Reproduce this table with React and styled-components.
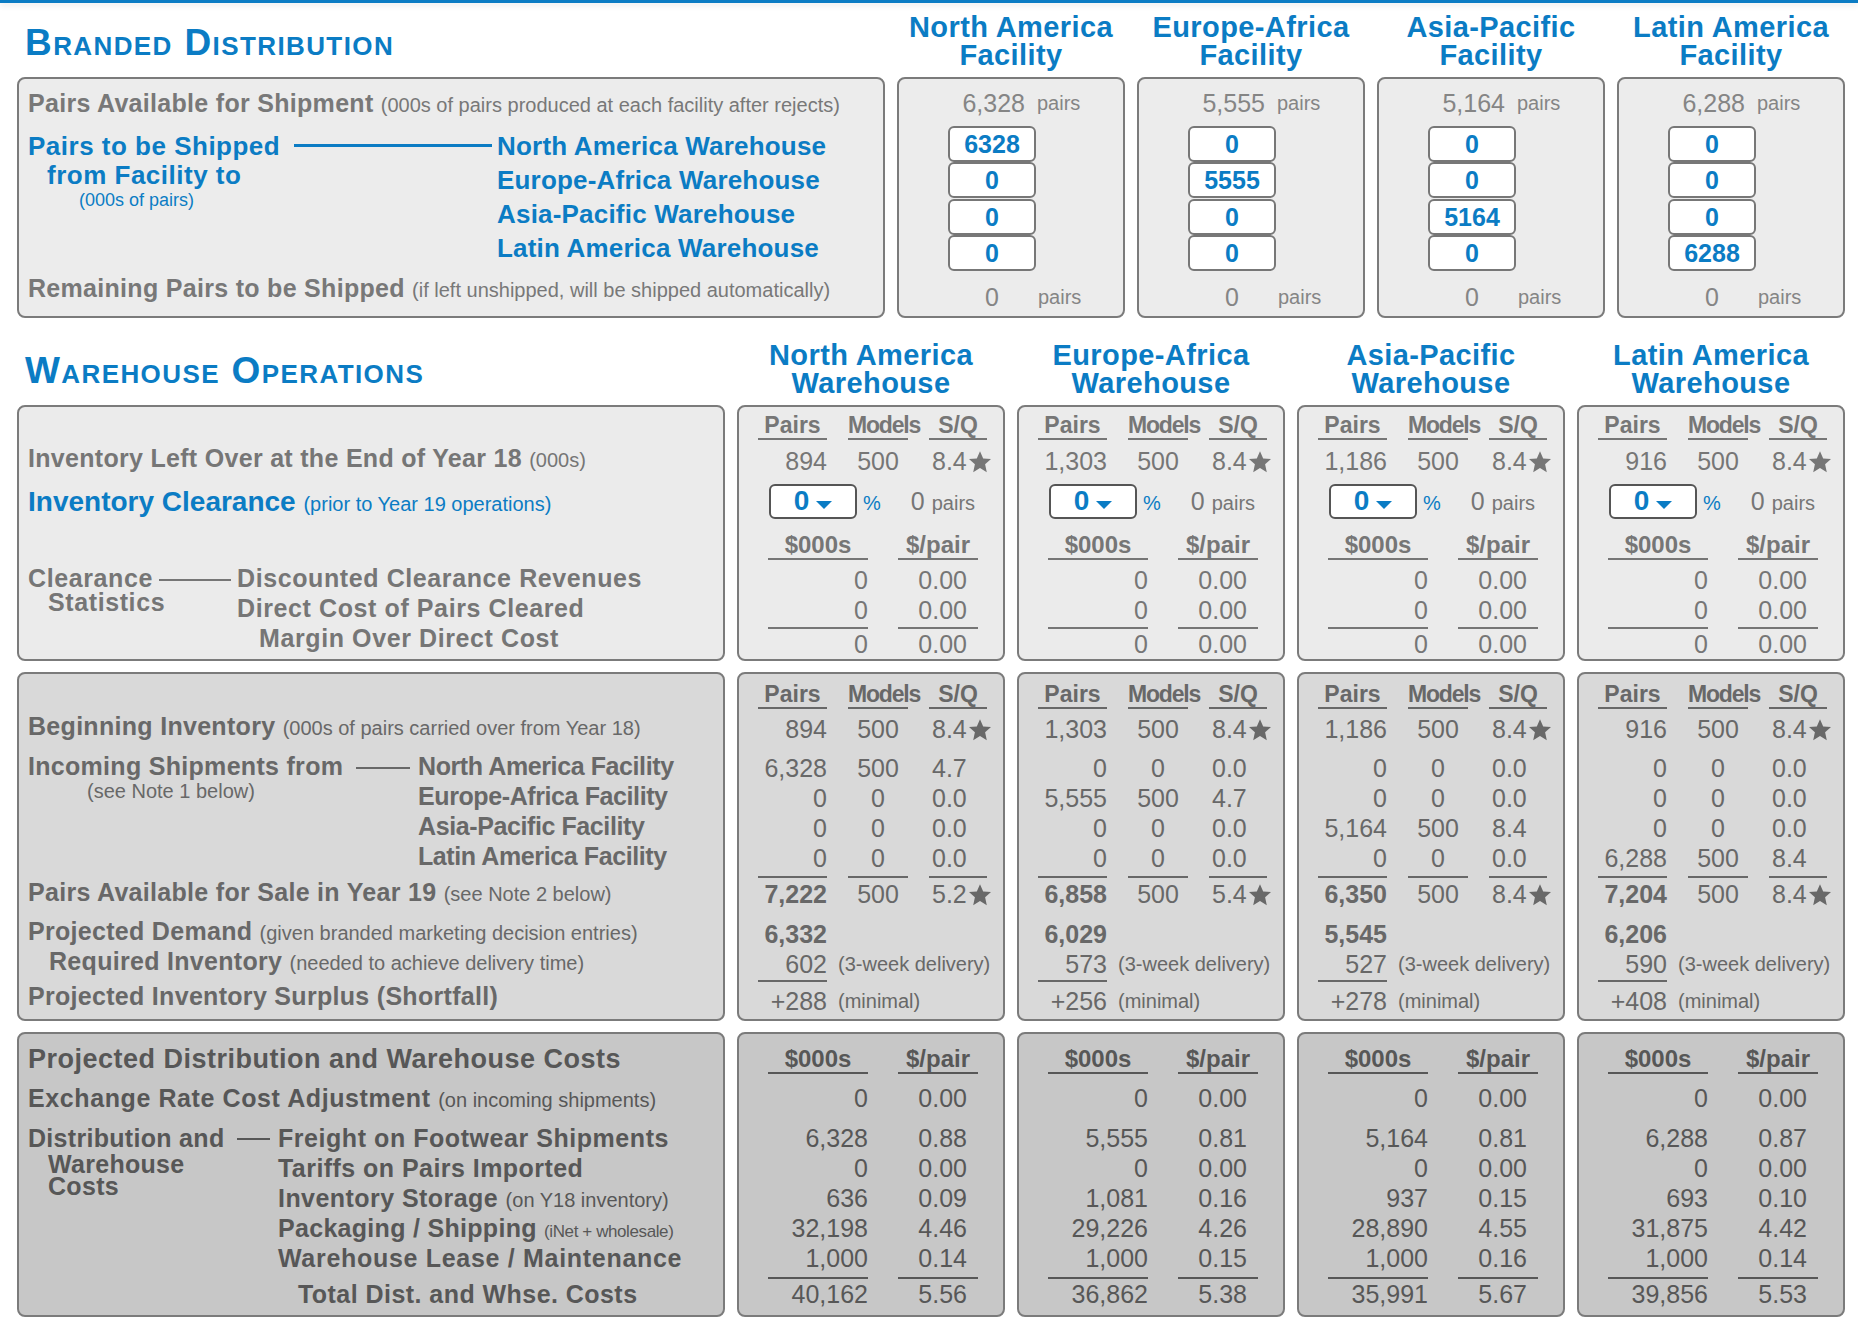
import React from 'react'
import styled, { createGlobalStyle } from 'styled-components'

const BLUE = '#0b7cc4'
const COLS1 = '868px repeat(4, 228px)'
const COLS2 = '708px repeat(4, 268px)'

const facilities = [
  { name: 'North America', avail: '6,328', ship: ['6328', '0', '0', '0'] },
  { name: 'Europe-Africa', avail: '5,555', ship: ['0', '5555', '0', '0'] },
  { name: 'Asia-Pacific', avail: '5,164', ship: ['0', '0', '5164', '0'] },
  { name: 'Latin America', avail: '6,288', ship: ['0', '0', '0', '6288'] },
]

const warehouses = [
  {
    name: 'North America', left: ['894', '500', '8.4'],
    incoming: [['6,328', '500', '4.7'], ['0', '0', '0.0'], ['0', '0', '0.0'], ['0', '0', '0.0']],
    avail: ['7,222', '500', '5.2'], demand: '6,332', required: '602', surplus: '+288',
    costs: [['6,328', '0.88'], ['0', '0.00'], ['636', '0.09'], ['32,198', '4.46'], ['1,000', '0.14']],
    total: ['40,162', '5.56'],
  },
  {
    name: 'Europe-Africa', left: ['1,303', '500', '8.4'],
    incoming: [['0', '0', '0.0'], ['5,555', '500', '4.7'], ['0', '0', '0.0'], ['0', '0', '0.0']],
    avail: ['6,858', '500', '5.4'], demand: '6,029', required: '573', surplus: '+256',
    costs: [['5,555', '0.81'], ['0', '0.00'], ['1,081', '0.16'], ['29,226', '4.26'], ['1,000', '0.15']],
    total: ['36,862', '5.38'],
  },
  {
    name: 'Asia-Pacific', left: ['1,186', '500', '8.4'],
    incoming: [['0', '0', '0.0'], ['0', '0', '0.0'], ['5,164', '500', '8.4'], ['0', '0', '0.0']],
    avail: ['6,350', '500', '8.4'], demand: '5,545', required: '527', surplus: '+278',
    costs: [['5,164', '0.81'], ['0', '0.00'], ['937', '0.15'], ['28,890', '4.55'], ['1,000', '0.16']],
    total: ['35,991', '5.67'],
  },
  {
    name: 'Latin America', left: ['916', '500', '8.4'],
    incoming: [['0', '0', '0.0'], ['0', '0', '0.0'], ['0', '0', '0.0'], ['6,288', '500', '8.4']],
    avail: ['7,204', '500', '8.4'], demand: '6,206', required: '590', surplus: '+408',
    costs: [['6,288', '0.87'], ['0', '0.00'], ['693', '0.10'], ['31,875', '4.42'], ['1,000', '0.14']],
    total: ['39,856', '5.53'],
  },
]

const GlobalStyle = createGlobalStyle`
  html, body { margin: 0; padding: 0; background: #fff; }
  body { font-family: "Liberation Sans", Arial, Helvetica, sans-serif; }
  #root { width: 1858px; }
`

const TopBar = styled.div`
  height: 3px;
  background: ${BLUE};
  box-shadow: 0 2px 6px rgba(0, 0, 0, 0.12);
`

const Page = styled.div`
  padding: 0 13px 0 17px;
`

const Grid = styled.div`
  display: grid;
  grid-template-columns: ${p => p.$cols};
  column-gap: 12px;
  margin-bottom: ${p => p.$mb || 0}px;
`

const HeadGrid = styled(Grid)`
  height: ${p => p.$h}px;
  align-items: start;
`

const Title = styled.h1`
  margin: 0;
  padding: ${p => p.$pt}px 0 0 8px;
  font-size: 37px;
  line-height: 37px;
  font-weight: 700;
  color: ${BLUE};
  letter-spacing: 1.4px;
  white-space: nowrap;
`

const Sm = styled.span`
  font-size: 26px;
`

const ColHead = styled.div`
  padding-top: ${p => p.$pt}px;
  text-align: center;
  font-size: 29px;
  line-height: 28px;
  font-weight: 700;
  letter-spacing: 0.4px;
  color: ${BLUE};
  white-space: nowrap;
`

const Panel = styled.div`
  box-sizing: border-box;
  height: ${p => p.$h}px;
  border: 2px solid #7b7b7b;
  border-radius: 8px;
  background: ${p => p.$bg};
  color: ${p => p.$fg};
`

const LabelRow = styled.div`
  margin-top: ${p => p.$mt || 0}px;
  padding-left: ${p => p.$pl ?? 9}px;
  height: ${p => p.$h || 30}px;
  line-height: ${p => p.$h || 30}px;
  font-size: ${p => p.$fs || 25}px;
  font-weight: 700;
  letter-spacing: ${p => p.$ls ?? 0.3}px;
  color: ${p => (p.$blue ? BLUE : 'inherit')};
  white-space: nowrap;
`

const Note = styled.span`
  font-size: ${p => p.$fs || 20}px;
  font-weight: 400;
  letter-spacing: ${p => p.$ls ?? 0}px;
`

const Block = styled.div`
  display: flex;
  align-items: flex-start;
  margin-top: ${p => p.$mt}px;
  padding-left: 9px;
  color: ${p => (p.$blue ? BLUE : 'inherit')};
  white-space: nowrap;
`

const SideCol = styled.div`
  flex: none;
  width: ${p => (p.$w ? `${p.$w}px` : 'auto')};
`

const Line = styled.div`
  height: ${p => p.$h}px;
  line-height: ${p => p.$h}px;
  padding-left: ${p => p.$indent || 0}px;
  font-size: ${p => p.$fs || 25}px;
  font-weight: ${p => (p.$light ? 400 : 700)};
  letter-spacing: ${p => p.$ls ?? 0.3}px;
`

const Dash = styled.div`
  flex: none;
  width: ${p => p.$w}px;
  height: ${p => p.$t || 2}px;
  margin: ${p => p.$top}px ${p => p.$gap}px 0 0;
  background: currentColor;
`

/* facility panels */
const AvailRow = styled.div`
  display: grid;
  grid-template-columns: ${p => p.$cols};
  column-gap: ${p => p.$gap}px;
  padding-left: ${p => p.$pl || 0}px;
  margin-top: ${p => p.$mt}px;
  height: 30px;
  line-height: 30px;
  color: #858585;
  white-space: nowrap;
`

const Num = styled.span`
  font-size: 25px;
  text-align: ${p => p.$align || 'right'};
  margin-left: ${p => p.$ml || 0}px;
`

const Unit = styled.span`
  font-size: 20px;
  margin-left: ${p => p.$ml || 0}px;
`

const ShipBox = styled.div`
  box-sizing: border-box;
  width: 88px;
  height: 36px;
  margin: ${p => p.$mt || 0}px 0 0.3px 49px;
  border: 2px solid #777;
  border-radius: 6px;
  background: #fff;
  text-align: center;
  line-height: 32px;
  font-size: 25px;
  font-weight: 700;
  color: ${BLUE};
`

/* warehouse panels */
const VRow = styled.div`
  display: grid;
  grid-template-columns: ${p => p.$cols};
  column-gap: ${p => p.$gap}px;
  padding-left: ${p => p.$pl}px;
  margin-top: ${p => p.$mt || 0}px;
  line-height: ${p => p.$h || 30}px;
  font-size: 25px;
  white-space: nowrap;
`

const PmsRow = styled(VRow).attrs({ $cols: '69px 60px 58px', $gap: 21, $pl: 19 })``
const CostRow = styled(VRow).attrs({ $cols: '100px 80px', $gap: 30, $pl: 29 })``

const Cell = styled.div`
  text-align: ${p => p.$align || 'right'};
  font-weight: ${p => (p.$bold ? 700 : 400)};
  padding: 0 ${p => p.$pr || 0}px ${p => p.$pb || 0}px ${p => p.$pl || 0}px;
  border-bottom: ${p => (p.$under ? '2px solid currentColor' : '0')};
`

const Aside = styled.div`
  grid-column: 2 / span 2;
  margin-left: -10px;
  font-size: 20px;
`

const HeadCell = styled.div`
  text-align: center;
  font-weight: 700;
  font-size: ${p => p.$fs || 23}px;
  line-height: 26px;
  letter-spacing: ${p => p.$ls || 0}px;
  border-bottom: 2px solid currentColor;
`

const ClearRow = styled.div`
  margin-top: 7.7px;
  height: 35px;
  line-height: 35px;
  padding-left: 30px;
  font-size: 25px;
  white-space: nowrap;
`

const Select = styled.div`
  display: inline-flex;
  vertical-align: top;
  box-sizing: border-box;
  width: 88px;
  height: 35px;
  align-items: center;
  justify-content: center;
  gap: 7px;
  border: 2px solid #555;
  border-radius: 6px;
  background: #fff;
  color: ${BLUE};
  font-size: 28px;
  font-weight: 700;
  line-height: normal;
`

const Caret = styled.span`
  width: 0;
  height: 0;
  margin-top: 8px;
  border-left: 8px solid transparent;
  border-right: 8px solid transparent;
  border-top: 8px solid ${BLUE};
`

const Pct = styled.span`
  margin-left: 6px;
  font-size: 20px;
  color: ${BLUE};
`

const StarSvg = styled.svg`
  width: 24px;
  height: 24px;
  margin-left: 1px;
  vertical-align: -4px;
  fill: currentColor;
`

const Star = () => (
  <StarSvg viewBox="0 0 24 24" aria-hidden="true">
    <polygon points="12,1.2 15.2,8.4 23,9.1 17.1,14.3 18.8,22.2 12,18 5.2,22.2 6.9,14.3 1,9.1 8.8,8.4" />
  </StarSvg>
)

const PmsHead = ({ mt }) => (
  <PmsRow $h={26} $mt={mt}>
    <HeadCell>Pairs</HeadCell>
    <HeadCell $ls={-1.2}>Models</HeadCell>
    <HeadCell>S/Q</HeadCell>
  </PmsRow>
)

const CostHead = ({ mt }) => (
  <CostRow $h={26} $mt={mt}>
    <HeadCell $fs={24}>$000s</HeadCell>
    <HeadCell $fs={24}>$/pair</HeadCell>
  </CostRow>
)

const Pms = ({ v, mt, star, bold, under, pb }) => (
  <PmsRow $mt={mt}>
    <Cell $bold={bold} $under={under} $pb={pb}>{v[0]}</Cell>
    <Cell $align="center" $under={under} $pb={pb}>{v[1]}</Cell>
    <Cell $align="left" $pl={3} $under={under} $pb={pb}>
      {v[2]}
      {star && <Star />}
    </Cell>
  </PmsRow>
)

const Cost = ({ v, mt, under, pb }) => (
  <CostRow $mt={mt}>
    <Cell $under={under} $pb={pb}>{v[0]}</Cell>
    <Cell $pr={11} $under={under} $pb={pb}>{v[1]}</Cell>
  </CostRow>
)

function BrandedDistribution() {
  return (
    <>
      <HeadGrid $cols={COLS1} $h={74}>
        <Title $pt={21}>
          B<Sm>RANDED</Sm> D<Sm>ISTRIBUTION</Sm>
        </Title>
        {facilities.map(f => (
          <ColHead key={f.name} $pt={10}>
            {f.name}
            <br />
            Facility
          </ColHead>
        ))}
      </HeadGrid>
      <Grid $cols={COLS1}>
        <Panel $h={241} $bg="#ececec" $fg="#787878">
          <LabelRow $mt={9.3}>
            Pairs Available for Shipment <Note>(000s of pairs produced at each facility after rejects)</Note>
          </LabelRow>
          <Block $mt={10.7} $blue>
            <SideCol $w={266}>
              <Line $h={34} $fs={26} $ls={0.5}>Pairs to be Shipped</Line>
              <Line $h={24} $fs={26} $ls={0.5} $indent={19}>from Facility to</Line>
              <Line $h={26} $fs={18} $ls={0} $indent={51} $light>(000s of pairs)</Line>
            </SideCol>
            <Dash $w={198} $t={3} $top={15.5} $gap={5} />
            <SideCol>
              {['North America', 'Europe-Africa', 'Asia-Pacific', 'Latin America'].map(n => (
                <Line key={n} $h={34} $fs={26} $ls={0.2}>{n} Warehouse</Line>
              ))}
            </SideCol>
          </Block>
          <LabelRow $mt={8.3}>
            Remaining Pairs to be Shipped <Note>(if left unshipped, will be shipped automatically)</Note>
          </LabelRow>
        </Panel>
        {facilities.map(f => (
          <Panel key={f.name} $h={241} $bg="#ececec" $fg="#858585">
            <AvailRow $cols="126px auto" $gap={12} $mt={9.3}>
              <Num>{f.avail}</Num>
              <Unit>pairs</Unit>
            </AvailRow>
            {f.ship.map((s, i) => (
              <ShipBox key={i} $mt={i === 0 ? 7.7 : 0}>{s}</ShipBox>
            ))}
            <AvailRow $cols="88px auto" $gap={2} $pl={49} $mt={11}>
              <Num $align="center">0</Num>
              <Unit>pairs</Unit>
            </AvailRow>
          </Panel>
        ))}
      </Grid>
    </>
  )
}

function WarehouseOperations() {
  return (
    <>
      <HeadGrid $cols={COLS2} $h={87}>
        <Title $pt={34}>
          W<Sm>AREHOUSE</Sm> O<Sm>PERATIONS</Sm>
        </Title>
        {warehouses.map(w => (
          <ColHead key={w.name} $pt={23}>
            {w.name}
            <br />
            Warehouse
          </ColHead>
        ))}
      </HeadGrid>

      <Grid $cols={COLS2} $mb={11}>
        <Panel $h={256} $bg="#ebebeb" $fg="#767676">
          <LabelRow $mt={36.3}>
            Inventory Left Over at the End of Year 18 <Note>(000s)</Note>
          </LabelRow>
          <LabelRow $mt={12} $h={34} $fs={28} $ls={0} $blue>
            Inventory Clearance <Note>(prior to Year 19 operations)</Note>
          </LabelRow>
          <Block $mt={44}>
            <SideCol $w={131}>
              <Line $h={30} $ls={0.6}>Clearance</Line>
              <Line $h={18} $ls={0.6} $indent={20}>Statistics</Line>
            </SideCol>
            <Dash $w={72} $top={15.7} $gap={6} />
            <SideCol>
              <Line $h={30} $ls={0.6}>Discounted Clearance Revenues</Line>
              <Line $h={30} $ls={0.6}>Direct Cost of Pairs Cleared</Line>
              <Line $h={30} $ls={0.6} $indent={22}>Margin Over Direct Cost</Line>
            </SideCol>
          </Block>
        </Panel>
        {warehouses.map(w => (
          <Panel key={w.name} $h={256} $bg="#ebebeb" $fg="#767676">
            <PmsHead mt={5} />
            <Pms v={w.left} mt={6.3} star />
            <ClearRow>
              <Select>
                0<Caret />
              </Select>
              <Pct>%</Pct>
              <Num $ml={30}>0</Num>
              <Unit $ml={7}>pairs</Unit>
            </ClearRow>
            <CostHead mt={12.7} />
            <Cost v={['0', '0.00']} mt={5.3} />
            <Cost v={['0', '0.00']} under pb={1.7} />
            <Cost v={['0', '0.00']} />
          </Panel>
        ))}
      </Grid>

      <Grid $cols={COLS2} $mb={11}>
        <Panel $h={349} $bg="#d9d9d9" $fg="#686868">
          <LabelRow $mt={37.3}>
            Beginning Inventory <Note>(000s of pairs carried over from Year 18)</Note>
          </LabelRow>
          <Block $mt={10}>
            <SideCol $w={328}>
              <Line $h={30}>Incoming Shipments from</Line>
              <Line $h={20} $fs={20} $ls={0} $indent={59} $light>(see Note 1 below)</Line>
            </SideCol>
            <Dash $w={54} $top={15.7} $gap={8} />
            <SideCol>
              {['North America', 'Europe-Africa', 'Asia-Pacific', 'Latin America'].map(n => (
                <Line key={n} $h={30} $ls={-0.4}>{n} Facility</Line>
              ))}
            </SideCol>
          </Block>
          <LabelRow $mt={6}>
            Pairs Available for Sale in Year 19 <Note>(see Note 2 below)</Note>
          </LabelRow>
          <LabelRow $mt={9}>
            Projected Demand <Note>(given branded marketing decision entries)</Note>
          </LabelRow>
          <LabelRow $pl={30}>
            Required Inventory <Note>(needed to achieve delivery time)</Note>
          </LabelRow>
          <LabelRow $mt={5}>Projected Inventory Surplus (Shortfall)</LabelRow>
        </Panel>
        {warehouses.map(w => (
          <Panel key={w.name} $h={349} $bg="#d9d9d9" $fg="#686868">
            <PmsHead mt={7} />
            <Pms v={w.left} mt={5.3} star />
            {w.incoming.map((r, i) => (
              <Pms key={i} v={r} mt={i === 0 ? 9 : 0} under={i === 3} pb={i === 3 ? 2.7 : 0} />
            ))}
            <Pms v={w.avail} mt={1.3} star bold />
            <PmsRow $mt={10}>
              <Cell $bold>{w.demand}</Cell>
            </PmsRow>
            <PmsRow>
              <Cell $under $pb={1}>{w.required}</Cell>
              <Aside>(3-week delivery)</Aside>
            </PmsRow>
            <PmsRow $mt={4}>
              <Cell>{w.surplus}</Cell>
              <Aside>(minimal)</Aside>
            </PmsRow>
          </Panel>
        ))}
      </Grid>

      <Grid $cols={COLS2}>
        <Panel $h={285} $bg="#c7c7c7" $fg="#575757">
          <LabelRow $mt={9.6} $fs={27} $ls={0.5}>Projected Distribution and Warehouse Costs</LabelRow>
          <LabelRow $mt={9.7} $ls={0.6}>
            Exchange Rate Cost Adjustment <Note>(on incoming shipments)</Note>
          </LabelRow>
          <Block $mt={10}>
            <SideCol $w={209}>
              <Line $h={30}>Distribution and</Line>
              <Line $h={22} $indent={20}>Warehouse</Line>
              <Line $h={22} $indent={20}>Costs</Line>
            </SideCol>
            <Dash $w={33} $top={15} $gap={8} />
            <SideCol>
              <Line $h={30} $ls={0.55}>Freight on Footwear Shipments</Line>
              <Line $h={30} $ls={0.45}>Tariffs on Pairs Imported</Line>
              <Line $h={30} $ls={0.45}>
                Inventory Storage <Note>(on Y18 inventory)</Note>
              </Line>
              <Line $h={30} $ls={0.3}>
                Packaging / Shipping <Note $fs={17} $ls={-0.4}>(iNet + wholesale)</Note>
              </Line>
              <Line $h={30} $ls={0.7}>Warehouse Lease / Maintenance</Line>
            </SideCol>
          </Block>
          <LabelRow $mt={6} $pl={279} $ls={0.45}>Total Dist. and Whse. Costs</LabelRow>
        </Panel>
        {warehouses.map(w => (
          <Panel key={w.name} $h={285} $bg="#c7c7c7" $fg="#575757">
            <CostHead mt={11.7} />
            <Cost v={['0', '0.00']} mt={9.6} />
            {w.costs.map((c, i) => (
              <Cost key={i} v={c} mt={i === 0 ? 10 : 0} under={i === 4} pb={i === 4 ? 3.7 : 0} />
            ))}
            <Cost v={w.total} />
          </Panel>
        ))}
      </Grid>
    </>
  )
}

export default function App() {
  return (
    <>
      <GlobalStyle />
      <TopBar />
      <Page>
        <BrandedDistribution />
        <WarehouseOperations />
      </Page>
    </>
  )
}
